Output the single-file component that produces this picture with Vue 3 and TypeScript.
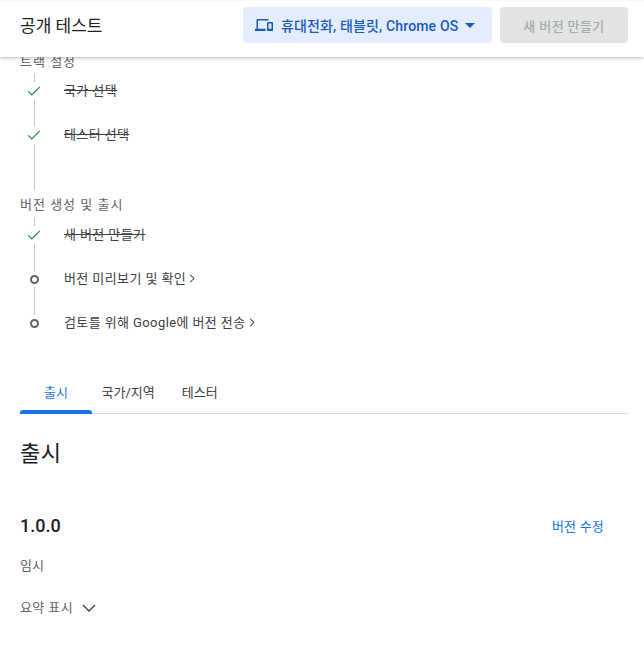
<template>
  <div class="page">
    <header class="topbar">
      <h1 class="page-title">공개 테스트</h1>
      <div class="actions">
        <button class="device-btn">
          <svg class="device-icon" viewBox="0 0 24 24" width="18" height="18">
            <path d="M4 6h14V4H4c-1.1 0-2 .9-2 2v11H0v3h14v-3H4V6zm19 2h-6c-.55 0-1 .45-1 1v10c0 .55.45 1 1 1h6c.55 0 1-.45 1-1V9c0-.55-.45-1-1-1zm-1 9h-4v-7h4v7z" fill="currentColor" />
          </svg>
          <span>휴대전화, 태블릿, Chrome OS</span>
          <span class="caret" />
        </button>
        <button class="create-btn" disabled>새 버전 만들기</button>
      </div>
    </header>

    <main class="content">
      <section v-for="group in groups" :key="group.title" class="step-group" :class="group.cls">
        <div class="group-title">{{ group.title }}</div>
        <div v-for="step in group.steps" :key="step.label" class="step">
          <div class="step-mark" :class="{ open: !step.done }">
            <svg v-if="step.done" viewBox="0 0 24 24" width="18" height="18">
              <path d="M9 16.2 4.8 12l-1 1L9 18.2 20.2 7l-1-1z" fill="#188038" />
            </svg>
            <span v-else class="ring" />
          </div>
          <span class="step-label" :class="{ done: step.done }">{{ step.label }}</span>
          <svg v-if="!step.done" class="step-arrow" viewBox="0 0 8 12" width="6" height="9">
            <path d="M1.5 1 6.5 6l-5 5" fill="none" stroke="#3c4043" stroke-width="1.4" />
          </svg>
        </div>
      </section>

      <nav class="tabs">
        <a v-for="(tab, i) in tabs" :key="tab" class="tab" :class="{ active: i === 0 }">{{ tab }}</a>
      </nav>

      <h2 class="section-title">출시</h2>

      <div class="release-head">
        <span class="version">1.0.0</span>
        <a class="edit-link">버전 수정</a>
      </div>
      <div class="status">임시</div>
      <div class="summary">
        <span>요약 표시</span>
        <svg viewBox="0 0 14 8" width="14" height="8">
          <path d="M1 1l6 6 6-6" fill="none" stroke="#3c4043" stroke-width="1.3" />
        </svg>
      </div>
    </main>
  </div>
</template>

<script setup lang="ts">
interface Step {
  label: string
  done: boolean
}

const groups: { title: string; cls: string; steps: Step[] }[] = [
  {
    title: '트랙 설정',
    cls: 'first',
    steps: [
      { label: '국가 선택', done: true },
      { label: '테스터 선택', done: true },
    ],
  },
  {
    title: '버전 생성 및 출시',
    cls: 'second',
    steps: [
      { label: '새 버전 만들기', done: true },
      { label: '버전 미리보기 및 확인', done: false },
      { label: '검토를 위해 Google에 버전 전송', done: false },
    ],
  },
]

const tabs = ['출시', '국가/지역', '테스터']
</script>

<style>
html,
body {
  background: #fff;
  overflow: hidden;
}
</style>

<style scoped>
.page {
  width: 644px;
  height: 648px;
  overflow: hidden;
  font-family: Roboto, "Noto Sans CJK KR", sans-serif;
  color: #3c4043;
  background: #fff;
}
.topbar {
  position: relative;
  z-index: 2;
  height: 57px;
  box-sizing: border-box;
  padding: 6px 16px 0 20px;
  display: flex;
  justify-content: space-between;
  background: #fff;
  border-top: 1px solid #f8f9fa;
  box-shadow: 0 1px 3px rgba(60, 64, 67, 0.35);
}
.page-title {
  margin: 1px 0 0;
  font-size: 17px;
  font-weight: 400;
  line-height: 36px;
  color: #202124;
}
.actions {
  display: flex;
  gap: 8px;
}
.device-btn,
.create-btn {
  height: 36px;
  border: 0;
  border-radius: 4px;
  font-family: inherit;
  font-size: 14px;
  font-weight: 500;
  display: flex;
  align-items: center;
}
.device-btn {
  width: 249px;
  padding: 0 16px 0 12px;
  gap: 8px;
  background: #e4edfd;
  color: #185abc;
  letter-spacing: 0.15px;
}
.device-icon {
  flex-shrink: 0;
}
.caret {
  margin-left: -1px;
  border-left: 5px solid transparent;
  border-right: 5px solid transparent;
  border-top: 5px solid #185abc;
}
.create-btn {
  width: 128px;
  justify-content: center;
  background: #e3e4e4;
  color: #a8abad;
  font-size: 13px;
  letter-spacing: 0.4px;
}
.content {
  padding: 0 16px 0 20px;
  margin-top: -3px;
}
.group-title {
  height: 16px;
  margin-bottom: -2px;
  font-size: 13px;
  line-height: 16px;
  color: #5f6368;
  letter-spacing: 1px;
}
.step-group.first {
  height: 143px;
  background: linear-gradient(#c8c9cb, #c8c9cb) 14px 19px / 1px 117px no-repeat;
}
.step-group.second {
  height: 147px;
  background: linear-gradient(#c8c9cb, #c8c9cb) 14px 20px / 1px 98px no-repeat;
}
.step-group.second .group-title {
  margin-bottom: -1px;
}
.step {
  height: 44px;
  display: flex;
  align-items: center;
  font-size: 13px;
  letter-spacing: 0.4px;
  color: #3c4043;
}
.step-mark {
  width: 28px;
  height: 18px;
  margin: 2px 16px 0 0;
  display: flex;
  align-items: center;
  justify-content: center;
  background: #fff;
}
.step-mark.open {
  height: 15px;
}
.ring {
  width: 9px;
  height: 9px;
  box-sizing: border-box;
  border: 2px solid #5f6368;
  border-radius: 50%;
}
.step-label {
  margin-bottom: 2px;
}
.step-label.done {
  text-decoration: line-through;
}
.step-arrow {
  margin-left: 3px;
}
.tabs {
  display: flex;
  height: 50px;
  margin-top: 20px;
  padding-top: 7px;
  border-bottom: 1px solid #dadce0;
  box-sizing: border-box;
}
.tab {
  position: relative;
  padding: 0 13.5px;
  line-height: 44px;
  font-size: 13px;
  color: #3c4043;
}
.tab.active {
  width: 72px;
  padding: 0;
  box-sizing: border-box;
  text-align: center;
  color: #1a73e8;
  margin-right: -4px;
}
.tab.active::after {
  content: "";
  position: absolute;
  left: 0;
  right: 0;
  bottom: -1px;
  height: 4px;
  background: #1a73e8;
  border-radius: 3px 3px 0 0;
}
.section-title {
  margin: 24px 0 0;
  font-size: 22px;
  font-weight: 400;
  line-height: 32px;
  letter-spacing: 0.5px;
  color: #202124;
}
.release-head {
  display: flex;
  justify-content: space-between;
  align-items: center;
  margin-top: 42px;
  height: 26px;
}
.version {
  font-size: 18px;
  font-weight: 500;
  color: #202124;
}
.edit-link {
  font-size: 13px;
  letter-spacing: 0.2px;
  color: #1a73e8;
  margin-right: 24px;
}
.status {
  margin-top: 18px;
  font-size: 13px;
  line-height: 20px;
  color: #5f6368;
}
.summary {
  display: flex;
  align-items: center;
  gap: 9px;
  margin-top: 22px;
  font-size: 13px;
  letter-spacing: 0.4px;
  line-height: 20px;
  color: #5f6368;
}
</style>
